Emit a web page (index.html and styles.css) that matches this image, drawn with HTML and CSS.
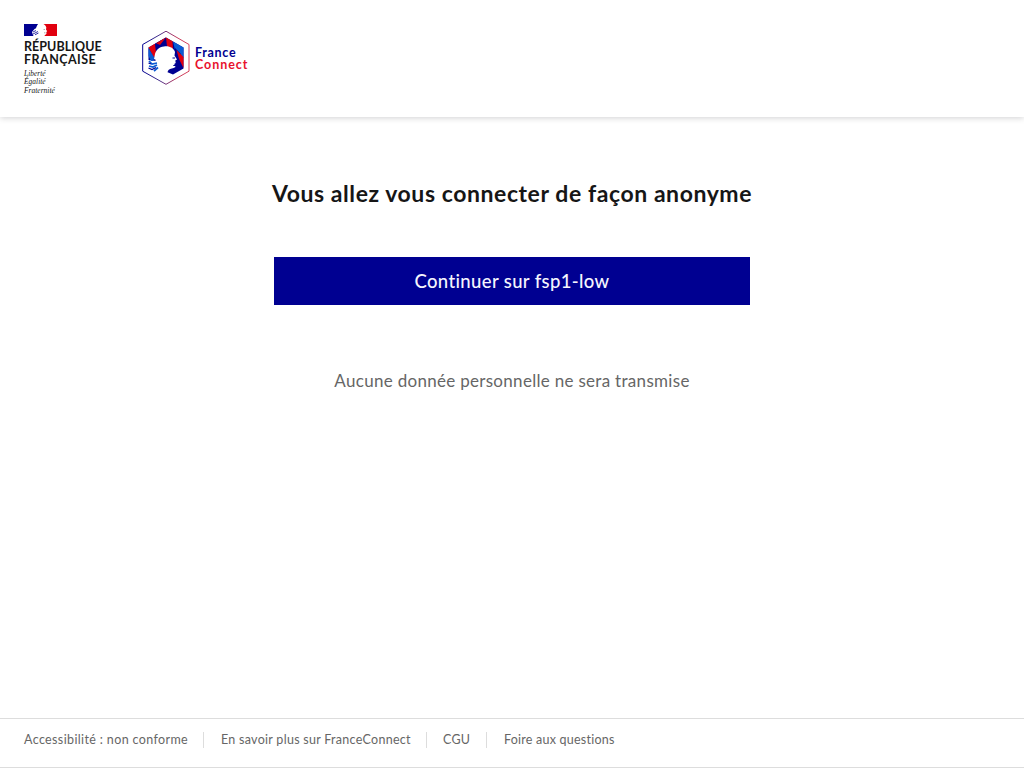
FILE: index.html
```html
<!DOCTYPE html>
<html lang="fr">
<head>
<meta charset="utf-8">
<title>FranceConnect</title>
<link rel="stylesheet" href="styles.css">
</head>
<body>
<header class="header">
  <div class="republic">
    <svg class="flag" viewBox="0 0 33 12" width="33" height="12" aria-hidden="true">
      <path fill="#000091" d="M0 0H15L13 2L12.500 4L10.500 5L8 8L9 11L10 12H0Z"/>
      <path fill="#fff" d="M14 0H20L22 3L21.500 5L23 7L22.500 9L21 10V12H9L12 9L10 7L12 5L12.500 3Z"/>
      <path fill="#e1000f" d="M19.500 0H33V12H20.500C20.500 11 22.300 11 22.500 9.600L22.300 8L23.200 7.200L22 5.400L22.300 3.500C22 2 21 .8 19.500 0Z"/>
      <path fill="none" stroke="#000091" stroke-width=".8" d="M9 8L12 6.500M9 10L14 7.500M11 10.800L14.500 9"/>
      <path fill="none" stroke="#777" stroke-width=".6" d="M19.500 5.500H21M20 8.800H21.500"/>
    </svg>
    <div class="republic-name"><span class="republic-top">RÉPUBLIQUE</span><br>FRANÇAISE</div>
    <div class="motto">Liberté<br>Égalité<br>Fraternité</div>
  </div>
  <div class="brand">
    <svg class="brand-mark" viewBox="0 0 48 54" width="48" height="54" aria-hidden="true">
      <defs>
        <linearGradient id="edge"><stop offset="0" stop-color="#000091"/><stop offset=".35" stop-color="#45308c"/><stop offset=".75" stop-color="#c43a5c"/><stop offset="1" stop-color="#d6405a"/></linearGradient>
      </defs>
      <path fill="#fff" stroke="url(#edge)" stroke-width="1" d="M24 .2L47 13.500V40.200L24 53.300L.7 40.200V13.500Z"/>
      <path fill="#000091" d="M24 6.500L41.500 16.500V37.500L31 43.500L25 41L14 30L6.500 29V16.500Z"/>
      <path fill="#e1000f" d="M6.500 16.500L13 12.800L15 20L12 27Z"/>
      <path fill="#0b5bd3" d="M6.500 17L12.500 27L11 30H9L6.500 25Z"/>
      <path fill="#000091" d="M13 12.800L24 6.500L25 15L17 17L14 22Z"/>
      <path fill="#e1000f" d="M14 12.300L24 6.500L18 14Z"/>
      <path fill="#e1000f" d="M24 6.500L30.500 10.200L31 18L25 15Z"/>
      <path fill="#0b5bd3" d="M31 10.500L41.500 16.500V27L33 19Z"/>
      <path fill="#000091" d="M33 17L39 23L36 37L32 30Z"/>
      <path fill="#e1000f" d="M34.500 19L41.500 26V37L37 28Z"/>
      <path fill="#fff" d="M22 15.500C27 14.500 32 17 33 21L32.500 24.500L35 28.500L33.300 29.500L33.700 32L32.200 33L33.500 36C31 38 28.500 37 26.500 39L25 42L27 46H17L14 40L17 34L12 31L14 29L12 28L13 23C14 19 17 16 22 15.500Z"/>
      <path fill="none" stroke="#0b5bd3" stroke-width="1.700" d="M7 30L10 33L15 32M7 35L11 36L15 34M12 40L16 36.500"/>
      <path fill="none" stroke="#000091" stroke-width="1.200" d="M6.500 32L9 33M6.500 37L10 38.500L14 36.500M30.500 27H33M31.300 34.500H34"/>
    </svg>
    <div class="brand-name"><span class="brand-france">France</span><span class="brand-connect">Connect</span></div>
  </div>
</header>
<main class="main">
  <h1 class="title">Vous allez vous connecter de façon anonyme</h1>
  <button class="continue" type="button">Continuer sur fsp1-low</button>
  <p class="note">Aucune donnée personnelle ne sera transmise</p>
</main>
<footer class="footer">
  <ul class="links">
    <li class="link access">Accessibilité : non conforme</li>
    <li class="link about">En savoir plus sur FranceConnect</li>
    <li class="link terms">CGU</li>
    <li class="link faq">Foire aux questions</li>
  </ul>
</footer>
</body>
</html>
```
FILE: styles.css
```css
* { box-sizing: border-box; }
body {
  margin: 0;
  height: 768px;
  display: flex;
  flex-direction: column;
  overflow: hidden;
  background: #fff;
  color: #161616;
  font-family: Lato, "Open Sans", sans-serif;
}
.header {
  height: 117px;
  flex: none;
  display: flex;
  align-items: flex-start;
  padding: 24px 24px 0;
  box-shadow: 0 1px 6px rgba(0, 0, 18, .18);
}
.republic { width: 118px; }
.flag { display: block; }
.republic-name {
  margin-top: 4px;
  font-size: 12.500px;
  font-weight: 700;
  line-height: 13px;
  letter-spacing: .45px;
}
.republic-top { letter-spacing: .05px; }
.motto {
  margin-top: 4px;
  font: italic 7.400px/8.300px "Liberation Serif", serif;
  letter-spacing: .05px;
}
.brand { display: flex; padding-top: 7px; }
.brand-mark { display: block; }
.brand-name {
  display: flex;
  flex-direction: column;
  padding: 16px 0 0 5px;
  font-size: 12.500px;
  font-weight: 700;
  line-height: 11.500px;
}
.brand-france { color: #000091; letter-spacing: .7px; }
.brand-connect { color: #e8112d; letter-spacing: .95px; }
.main {
  flex: 1;
  display: flex;
  flex-direction: column;
  align-items: center;
  padding-top: 62px;
}
.title {
  margin: 0;
  font-size: 23px;
  font-weight: 700;
  line-height: 28px;
  letter-spacing: .57px;
  white-space: nowrap;
}
.continue {
  width: 476px;
  height: 48px;
  margin: 50px 0 0;
  padding: 0 0 1px;
  border: 0;
  background: #000091;
  color: #f5f5fe;
  font: 500 18.500px/24px Lato, "Open Sans", sans-serif;
  letter-spacing: .37px;
}
.note {
  margin: 64px 0 0;
  color: #666;
  font-size: 17px;
  line-height: 24px;
  letter-spacing: .3px;
  white-space: nowrap;
}
.footer {
  height: 50px;
  flex: none;
  border-top: 1px solid #ddd;
  border-bottom: 1px solid #ddd;
  padding: 13px 24px 0;
}
.links {
  display: flex;
  margin: 0;
  padding: 0;
  list-style: none;
}
.link {
  height: 16px;
  color: #666;
  font-size: 12.500px;
  line-height: 16px;
  letter-spacing: .28px;
  white-space: nowrap;
}
.link + .link { border-left: 1px solid #ddd; padding-left: 17px; }
.access { width: 179px; letter-spacing: .37px; }
.about { width: 223px; }
.link.terms { width: 60px; padding-left: 16px; }
.faq { letter-spacing: .23px; }
```
